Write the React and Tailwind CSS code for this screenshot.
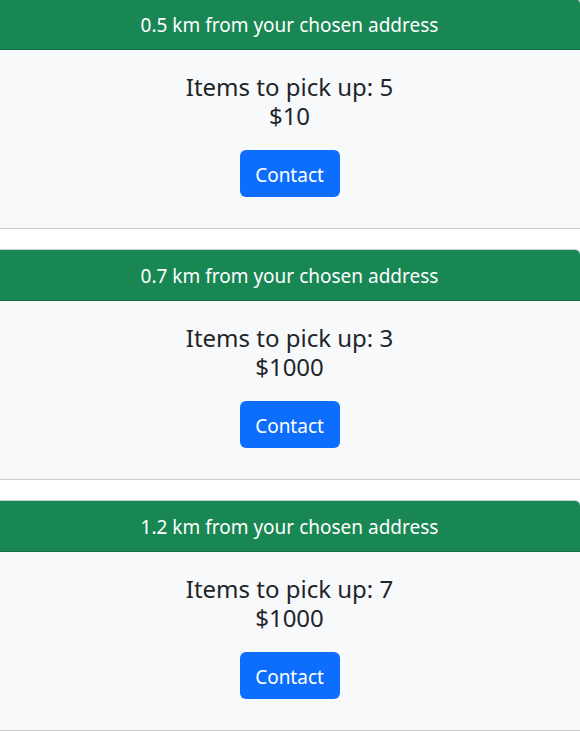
import React from "react";

const items = [
  { dist: "0.5", count: 5, price: "$10" },
  { dist: "0.7", count: 3, price: "$1000" },
  { dist: "1.2", count: 7, price: "$1000" },
];

function Card({ dist, count, price }) {
  return (
    <div className="-ml-2 -mr-px mb-5 overflow-hidden rounded-t-md border border-[rgba(0,0,0,0.175)] bg-[#f8f9fa]">
      <div className="flex h-[51px] items-center justify-center border-b border-[rgba(0,0,0,0.175)] bg-[#198754] pl-[6px] pt-[3px] text-[19px] text-white">
        {dist} km from your chosen address
      </div>
      <div className="flex h-[178px] flex-col items-center pl-[6px] pt-[22px] text-[#212529]">
        <div className="text-[24px] leading-[29px]">Items to pick up: {count}</div>
        <div className="text-[24px] leading-[29px]">{price}</div>
        <button className="mt-[20px] h-[47px] w-[100px] rounded-md bg-[#0d6efd] pt-[3px] text-[19px] text-white">
          Contact
        </button>
      </div>
    </div>
  );
}

export default function App() {
  return (
    <div className="-mt-[2px] overflow-hidden bg-white" style={{ fontFamily: '"Noto Sans", sans-serif' }}>
      {items.map((it) => (
        <Card key={it.dist} {...it} />
      ))}
    </div>
  );
}
